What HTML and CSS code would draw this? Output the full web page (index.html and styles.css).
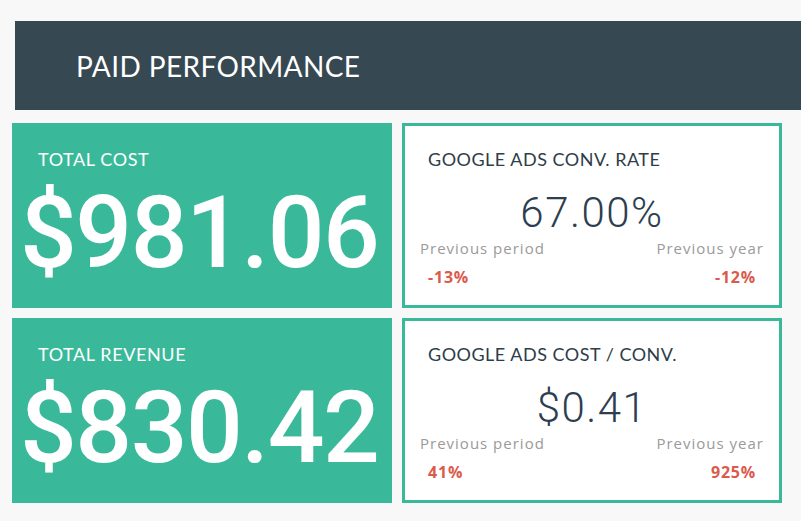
FILE: index.html
```html
<!DOCTYPE html>
<html lang="en">

<head>
    <meta charset="UTF-8">
    <meta name="viewport" content="width=device-width, initial-scale=1.0">
    <title>Paid Performance</title>
    <link rel="stylesheet" href="styles.css">
</head>

<body>

    <div class="header">
        <h1>PAID PERFORMANCE</h1>
    </div>

    <div class="grid">
        <!-- Big number tiles -->
        <div class="tile">
            <div class="tile-title">TOTAL COST</div>
            <div class="tile-value">$981.06</div>
        </div>

        <div class="card">
            <div class="card-title">GOOGLE ADS CONV. RATE</div>
            <div class="card-value">67.00%</div>
            <div class="compare">
                <div class="compare-col">
                    <div class="compare-label">Previous period</div>
                    <div class="compare-value">-13%</div>
                </div>
                <div class="compare-col right">
                    <div class="compare-label">Previous year</div>
                    <div class="compare-value">-12%</div>
                </div>
            </div>
        </div>

        <div class="tile">
            <div class="tile-title">TOTAL REVENUE</div>
            <div class="tile-value">$830.42</div>
        </div>

        <div class="card">
            <div class="card-title">GOOGLE ADS COST / CONV.</div>
            <div class="card-value">$0.41</div>
            <div class="compare">
                <div class="compare-col">
                    <div class="compare-label">Previous period</div>
                    <div class="compare-value">41%</div>
                </div>
                <div class="compare-col right">
                    <div class="compare-label">Previous year</div>
                    <div class="compare-value">925%</div>
                </div>
            </div>
        </div>
    </div>

</body>

</html>
```

FILE: styles.css
```css
body {
    margin: 0;
    background-color: #f8f8f8;
    font-family: "Open Sans", Arial, sans-serif;
}

.header {
    background-color: #364851;
    margin: 21px 0 13px 15px;
    height: 89px;
    padding-left: 61px;
    display: flex;
    align-items: center;
}

.header h1 {
    margin: 0;
    color: #fff;
    font-family: "Lato", sans-serif;
    font-weight: 400;
    font-size: 28px;
    letter-spacing: 0.4px;
}

.grid {
    display: grid;
    grid-template-columns: 380px 380px;
    grid-auto-rows: 185px;
    gap: 10px;
    margin-left: 12px;
}

.tile {
    background-color: #3ab99a;
    color: #fff;
    padding: 26px 0 0 26px;
    box-sizing: border-box;
}

.tile-title {
    font-family: "Lato", sans-serif;
    font-size: 18px;
    line-height: 20px;
    letter-spacing: 0.6px;
}

.tile-value {
    font-family: "Roboto", sans-serif;
    font-weight: 500;
    font-size: 100px;
    line-height: 100px;
    letter-spacing: -1.5px;
    margin: 14px 0 0 -18px;
}

.card {
    background-color: #fff;
    border: 3px solid #3ab99a;
    padding: 23px 15px 0 15px;
    box-sizing: border-box;
}

.card-title {
    font-family: "Lato", sans-serif;
    font-size: 18px;
    line-height: 20px;
    letter-spacing: 0.5px;
    color: #2e3d48;
    padding-left: 8px;
}

.card-value {
    font-family: "Roboto", sans-serif;
    font-weight: 300;
    font-size: 42px;
    line-height: 50px;
    letter-spacing: 1.5px;
    color: #2c3e50;
    text-align: center;
    margin-top: 19px;
}

.compare {
    display: flex;
    justify-content: space-between;
}

.compare-label {
    font-size: 15px;
    letter-spacing: 1px;
    color: #9a9a9a;
}

.compare-value {
    font-size: 16px;
    font-weight: 700;
    letter-spacing: 0.8px;
    color: #db5a4b;
    margin-top: 8px;
    padding-left: 8px;
}

.compare-col.right {
    text-align: right;
}

.compare-col.right .compare-value {
    padding-left: 0;
    padding-right: 8px;
}
```
